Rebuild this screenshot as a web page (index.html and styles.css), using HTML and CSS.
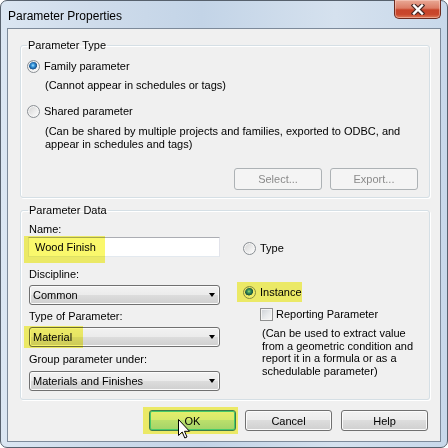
FILE: index.html
```html
<!DOCTYPE html>
<html>
<head lang="en">
    <meta charset="UTF-8">
    <title>Parameter Properties</title>
    <link rel="stylesheet" href="styles.css">
</head>
<body>
<div class="window">
    <div class="titlebar">
        <span class="title">Parameter Properties</span>
        <span class="close">
            <svg width="14" height="11" viewBox="0 0 14 11">
                <path d="M3 1.5 L11 9.5 M11 1.5 L3 9.5" stroke="#4a2a26" stroke-width="4.6" stroke-linecap="square"/>
                <path d="M3 1.5 L11 9.5 M11 1.5 L3 9.5" stroke="#ffffff" stroke-width="2.4" stroke-linecap="square"/>
            </svg>
        </span>
    </div>
    <div class="client">
        <fieldset class="group group-type">
            <legend>Parameter Type</legend>
            <div class="option"><span class="radio checked"></span>Family parameter</div>
            <div class="note">(Cannot appear in schedules or tags)</div>
            <div class="option option-shared"><span class="radio"></span>Shared parameter</div>
            <div class="note note-shared">(Can be shared by multiple projects and families, exported to ODBC, and<br>appear in schedules and tags)</div>
            <div class="group-buttons">
                <button class="btn" disabled>Select...</button>
                <button class="btn" disabled>Export...</button>
            </div>
        </fieldset>

        <fieldset class="group group-data">
            <legend>Parameter Data</legend>
            <div class="data-cols">
                <div class="col-left">
                    <div class="field-label">Name:</div>
                    <div class="textbox">Wood Finish<span class="marker marker-name"></span></div>
                    <div class="field-label label-gap">Discipline:</div>
                    <div class="combo">Common<span class="arrow"></span></div>
                    <div class="field-label">Type of Parameter:</div>
                    <div class="combo">Material<span class="arrow"></span><span class="marker marker-type"></span></div>
                    <div class="field-label label-group">Group parameter under:</div>
                    <div class="combo combo-last">Materials and Finishes<span class="arrow"></span></div>
                </div>
                <div class="col-right">
                    <div class="option option-type"><span class="radio"></span>Type</div>
                    <div class="option option-instance"><span class="radio checked"></span>Instance<span class="marker marker-instance"></span></div>
                    <div class="check-row"><span class="checkbox"></span>Reporting Parameter</div>
                    <div class="note-right">(Can be used to extract value<br>from a geometric condition and<br>report it in a formula or as a<br>schedulable parameter)</div>
                </div>
            </div>
        </fieldset>

        <div class="dialog-buttons">
            <button class="btn btn-default">OK<span class="marker marker-ok"></span>
                <svg class="cursor" width="13" height="21" viewBox="0 0 13 21">
                    <path d="M0.5 0.5 V16.5 L4.2 13 L6.8 19 L9 18 L6.5 12.3 H11.5 Z" fill="#ffffff" stroke="#000000" stroke-width="1" stroke-linejoin="miter"/>
                </svg>
            </button>
            <button class="btn">Cancel</button>
            <button class="btn">Help</button>
        </div>
    </div>
</div>
</body>
</html>
```

FILE: styles.css
```css
* {
    box-sizing: border-box;
}

body {
    margin: 0;
    width: 448px;
    height: 448px;
    background: #ffffff;
    font-family: "Liberation Sans", Arial, sans-serif;
    font-size: 11px;
    color: #000000;
}

.window {
    width: 448px;
    height: 448px;
    display: flex;
    flex-direction: column;
    padding: 0 6px 5px 6px;
    border: 1px solid #57616d;
    border-radius: 7px;
    background: linear-gradient(90deg, #dbe6f2 0%, #cfdceb 20%, #c3d4e7 45%, #d5e1ee 75%, #c8d8ea 100%);
}

/* title bar */
.titlebar {
    height: 27px;
    display: flex;
    justify-content: space-between;
    align-items: flex-start;
}

.title {
    margin: 8px 0 0 1px;
    font-size: 12px;
    line-height: 14px;
}

.close {
    width: 47px;
    height: 19px;
    margin: -1px 0 0 0;
    display: flex;
    align-items: center;
    justify-content: center;
    border: 1px solid #6b2a1f;
    border-top: none;
    border-radius: 0 0 5px 5px;
    background: linear-gradient(180deg, #e9a996 0%, #dc7d66 45%, #c7442a 55%, #c9472c 80%, #dd7a58 100%);
    box-shadow: inset 0 0 0 1px rgba(255, 220, 210, 0.45);
}

/* client area */
.client {
    flex: 1;
    display: flex;
    flex-direction: column;
    padding: 10px 10px 0 12px;
    background: #f0f0f0;
    border: 1px solid #7d8a9a;
}

.group {
    margin: 0;
    min-width: 0;
    border: 1px solid #d5dfe5;
    border-radius: 3px;
    box-shadow: inset 1px 1px 0 #ffffff, 1px 1px 0 #ffffff;
}

.group legend {
    padding: 0 1px;
    line-height: 13px;
}

.group-type {
    padding: 8px 11px 7px 6px;
}

.group-data {
    margin-top: 6px;
    padding: 6px 8px 8px 7px;
}

.option {
    position: relative;
    display: flex;
    align-items: center;
    height: 13px;
    line-height: 13px;
}

.option-shared {
    margin-top: 13px;
}

.radio {
    width: 13px;
    height: 13px;
    margin-right: 4px;
    border: 1px solid #8a8f94;
    border-radius: 50%;
    background: linear-gradient(135deg, #d2d2d2 0%, #eeeeee 60%, #ffffff 100%);
    box-shadow: inset 0 0 0 1px #f6f6f6;
}

.radio.checked {
    background: radial-gradient(circle at 45% 40%, #a9e4ff 0, #3a9ae0 1.6px, #1c5d9c 3.4px, #2a5f8f 3.9px, transparent 4.3px),
        linear-gradient(135deg, #d2d2d2 0%, #eeeeee 60%, #ffffff 100%);
}

.note {
    margin: 6px 0 0 18px;
    line-height: 13px;
}

.note-shared {
    margin-top: 7px;
}

.group-buttons {
    margin-top: 17px;
    display: flex;
    justify-content: flex-end;
    gap: 8px;
}

.group-buttons .btn {
    width: 88px;
    height: 22px;
}

/* buttons */
.btn {
    position: relative;
    width: 87px;
    height: 21px;
    padding: 0;
    font-family: inherit;
    font-size: 11px;
    color: #000000;
    border: 1px solid #707070;
    border-radius: 3px;
    background: linear-gradient(180deg, #f2f2f2 0%, #ebebeb 50%, #dddddd 50%, #cfcfcf 100%);
    box-shadow: inset 0 0 0 1px #fbfbfb;
}

.btn:disabled {
    color: #8a8a8a;
    border-color: #adb2b5;
    background: #f4f4f4;
    box-shadow: none;
}

.btn-default {
    border-color: #3c7fb1;
    background: linear-gradient(180deg, #eaf6fd 0%, #d9f0fc 50%, #bee6fd 50%, #a7d9f5 100%);
    box-shadow: inset 0 0 0 1px #48d0f8;
}

.dialog-buttons {
    margin-top: 10px;
    padding-right: 2px;
    display: flex;
    justify-content: flex-end;
    gap: 9px;
}

.cursor {
    position: absolute;
    left: 28px;
    top: 8px;
}

/* parameter data */
.data-cols {
    display: grid;
    grid-template-columns: 192px 1fr;
    column-gap: 23px;
}

.col-left {
    padding-left: 1px;
}

.field-label {
    margin-top: 5px;
    line-height: 13px;
}

.col-left .field-label:first-child {
    margin-top: 0;
}

.label-gap {
    margin-top: 11px;
}

.label-group {
    margin-top: 6px;
}

.textbox {
    position: relative;
    height: 20px;
    margin: 1px 0 0 -1px;
    padding-left: 6px;
    line-height: 18px;
    background: #ffffff;
    border: 1px solid #e2e3ea;
    border-top-color: #abadb3;
    border-bottom-color: #e3e9ef;
}

.combo {
    position: relative;
    height: 20px;
    margin-top: 4px;
    padding-left: 3px;
    line-height: 18px;
    border: 1px solid #707070;
    border-radius: 3px;
    background: linear-gradient(180deg, #f2f2f2 0%, #ebebeb 50%, #dddddd 50%, #cfcfcf 100%);
    box-shadow: inset 0 0 0 1px #fbfbfb;
}

.combo-last {
    margin-top: 5px;
}

.arrow {
    position: absolute;
    right: 4px;
    top: 7px;
    border-style: solid;
    border-width: 4px 3.5px 0 3.5px;
    border-color: #000000 transparent transparent transparent;
}

.col-right {
    padding-top: 19px;
}

.option-instance {
    margin-top: 31px;
}

.check-row {
    display: flex;
    align-items: center;
    height: 13px;
    margin: 9px 0 0 17px;
    line-height: 13px;
}

.checkbox {
    width: 13px;
    height: 13px;
    margin-right: 3px;
    border: 1px solid #8e8f8f;
    background: linear-gradient(135deg, #cbcfd5 0%, #e8eaec 55%, #f7f7f7 100%);
    box-shadow: inset 0 0 0 1px #f4f4f4;
}

.note-right {
    margin: 6px 0 0 19px;
    line-height: 12.5px;
}

/* yellow highlighter strokes */
.marker {
    position: absolute;
    background: #faf86c;
    mix-blend-mode: multiply;
}

.marker-name {
    left: -5px;
    top: -2px;
    width: 81px;
    height: 27px;
}

.marker-type {
    left: -6px;
    top: -2px;
    width: 59px;
    height: 22px;
}

.marker-instance {
    left: -6px;
    top: -4px;
    width: 65px;
    height: 20px;
}

.marker-ok {
    left: -7px;
    top: -4px;
    width: 95px;
    height: 27px;
}
```
